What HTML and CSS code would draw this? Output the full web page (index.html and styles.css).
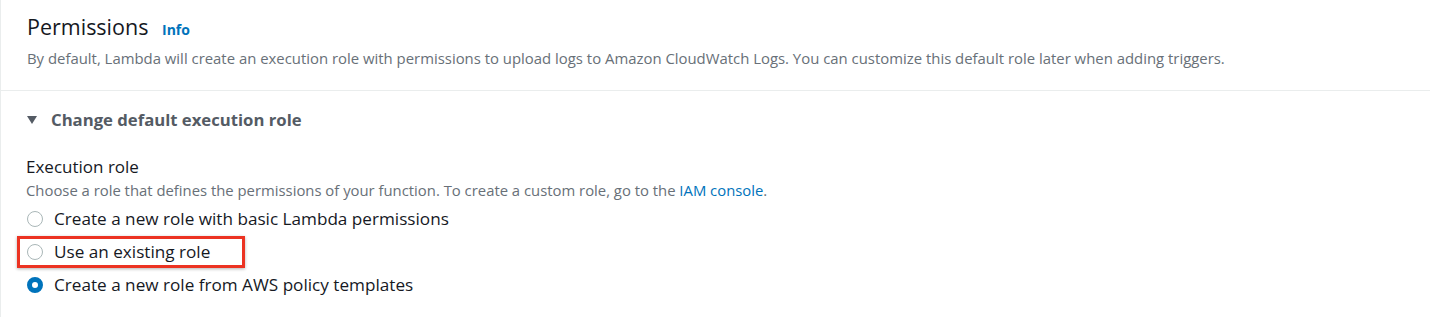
FILE: index.html
```html
<!DOCTYPE html>
<html lang="en">
<head>
    <meta charset="UTF-8">
    <meta name="viewport" content="width=device-width, initial-scale=1.0">
    <title>Permissions</title>
    <link rel="stylesheet" href="styles.css">
</head>
<body>
    <div class="panel">
        <div class="panel-header">
            <h2>Permissions <a href="#" class="info">Info</a></h2>
            <p class="desc">By default, Lambda will create an execution role with permissions to upload logs to Amazon CloudWatch Logs. You can customize this default role later when adding triggers.</p>
        </div>

        <div class="panel-body">
            <div class="expander">
                <span class="caret"></span>
                <span>Change default execution role</span>
            </div>

            <div class="field">
                <div class="field-label">Execution role</div>
                <div class="field-desc">Choose a role that defines the permissions of your function. To create a custom role, go to the <a href="#">IAM console</a>.</div>
                <div class="options">
                    <label class="option">
                        <span class="radio"></span>
                        <span>Create a new role with basic Lambda permissions</span>
                    </label>
                    <label class="option marked">
                        <span class="radio"></span>
                        <span>Use an existing role</span>
                    </label>
                    <label class="option">
                        <span class="radio checked"></span>
                        <span>Create a new role from AWS policy templates</span>
                    </label>
                </div>
            </div>
        </div>
    </div>
</body>
</html>
```

FILE: styles.css
```css
body {
    font-family: "Open Sans", Arial, sans-serif;
    margin: 0;
    background-color: #fff;
    color: #16191f;
}
.panel {
    border-left: 1px solid #eaeded;
    height: 317px;
}
.panel-header {
    padding: 13px 26px 22px 26px;
    border-bottom: 1px solid #eaeded;
}
.panel-header h2 {
    margin: 0;
    font-size: 21.5px;
    font-weight: 400;
    line-height: 28px;
    color: #16191f;
}
.info {
    margin-left: 8px;
    font-size: 14px;
    font-weight: 700;
    color: #0073bb;
    text-decoration: none;
}
.desc {
    margin: 4px 0 0 0;
    font-size: 14.9px;
    line-height: 20px;
    color: #687078;
}
.panel-body {
    padding: 17px 26px 0 25px;
}
.expander {
    display: flex;
    align-items: center;
    gap: 14px;
    font-size: 16.7px;
    font-weight: 700;
    line-height: 24px;
    color: #545b64;
}
.caret {
    width: 0;
    height: 0;
    margin-left: 1px;
    border-left: 5px solid transparent;
    border-right: 5px solid transparent;
    border-top: 8px solid #545b64;
}
.field {
    margin-top: 24px;
}
.field-label {
    font-size: 17px;
    line-height: 22px;
}
.field-desc {
    margin-top: 3px;
    font-size: 14.85px;
    line-height: 18px;
    color: #687078;
}
.field-desc a {
    color: #0073bb;
    text-decoration: none;
}
.options {
    margin-top: 3px;
}
.option {
    position: relative;
    display: flex;
    align-items: center;
    gap: 11px;
    width: fit-content;
    height: 33px;
    font-size: 17.15px;
    color: #16191f;
}
.radio {
    box-sizing: border-box;
    width: 16px;
    height: 16px;
    margin-left: 1px;
    border: 1px solid #aab7b8;
    border-radius: 50%;
    background-color: #fff;
}
.radio.checked {
    border: 5px solid #0073bb;
}
.marked::after {
    content: "";
    position: absolute;
    left: -9px;
    right: -35px;
    top: 1px;
    bottom: 0;
    border: 3px solid #ec3322;
    box-shadow: 0 1px 3px rgba(0, 0, 0, 0.3);
}
```
